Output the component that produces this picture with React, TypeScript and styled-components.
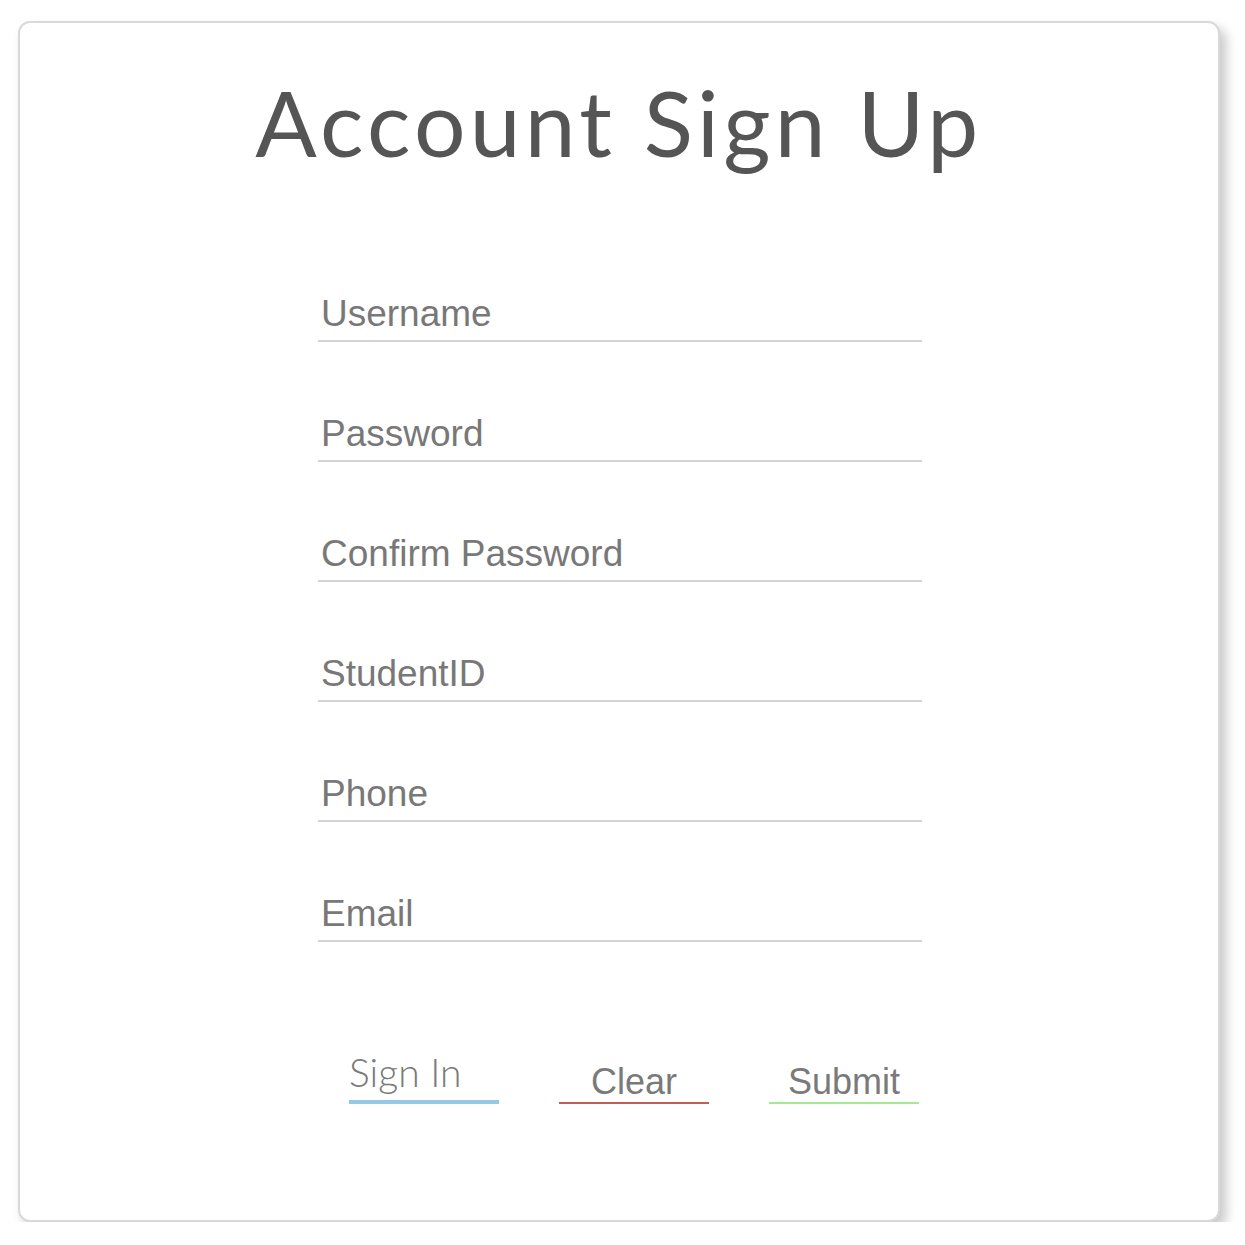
import React from "react";
import styled, { createGlobalStyle } from "styled-components";

const Global = createGlobalStyle`
  html, body { margin: 0; padding: 0; background: #ffffff; }
  * { box-sizing: border-box; }
`;

const Page = styled.div`
  padding: 21px 0 0 18px;
`;

const Card = styled.div`
  width: 1202px;
  height: 1201px;
  border: 2px solid #d9d9d9;
  border-radius: 12px;
  background: #fff;
  box-shadow: 6px 7px 12px rgba(0, 0, 0, 0.22);
  display: flex;
  flex-direction: column;
  align-items: center;
`;

const Title = styled.h1`
  margin: 39px 0 0 0;
  font-family: "Lato", "DejaVu Sans", sans-serif;
  font-weight: 400;
  font-size: 91px;
  line-height: 120px;
  color: #555555;
  letter-spacing: 4.3px;
`;

const Form = styled.form`
  width: 604px;
  margin: 110px 0 0 2px;
  display: flex;
  flex-direction: column;
  gap: 70px;
`;

const Field = styled.input`
  width: 100%;
  height: 50px;
  border: none;
  border-bottom: 2px solid #d3d3d3;
  outline: none;
  padding: 0 0 5px 3px;
  font-family: "Liberation Sans", Arial, sans-serif;
  font-size: 37px;
  color: #787878;
  background: transparent;
  &::placeholder { color: #787878; }
`;

const Buttons = styled.div`
  display: flex;
  gap: 60px;
  margin: 110px 0 0 30px;
`;

const Btn = styled.button<{ $line: string; $thick: number; $left?: boolean }>`
  width: 150px;
  height: 52px;
  border: none;
  border-bottom: ${(p) => p.$thick}px solid ${(p) => p.$line};
  background: transparent;
  padding: 0 0 ${(p) => (p.$left ? "10px" : "2px")} 0;
  display: flex;
  align-items: flex-end;
  justify-content: ${(p) => (p.$left ? "flex-start" : "center")};
  font-family: ${(p) => (p.$left ? `"Lato", sans-serif` : `"Liberation Sans", Arial, sans-serif`)};
  font-weight: ${(p) => (p.$left ? 300 : 400)};
  font-size: ${(p) => (p.$left ? "39px" : "36px")};
  color: #7a7a7a;
  line-height: 36px;
  cursor: pointer;
`;

export default function App() {
  return (
    <>
      <Global />
      <Page>
        <Card>
          <Title>Account Sign Up</Title>
          <Form onSubmit={(e) => e.preventDefault()}>
            <Field placeholder="Username" />
            <Field placeholder="Password" type="password" />
            <Field placeholder="Confirm Password" type="password" />
            <Field placeholder="StudentID" />
            <Field placeholder="Phone" />
            <Field placeholder="Email" />
          </Form>
          <Buttons>
            <Btn $line="#97c9e6" $thick={4} $left type="button">Sign In</Btn>
            <Btn $line="#bf5f57" $thick={2} type="button">Clear</Btn>
            <Btn $line="#a3e895" $thick={2} type="button">Submit</Btn>
          </Buttons>
        </Card>
      </Page>
    </>
  );
}
